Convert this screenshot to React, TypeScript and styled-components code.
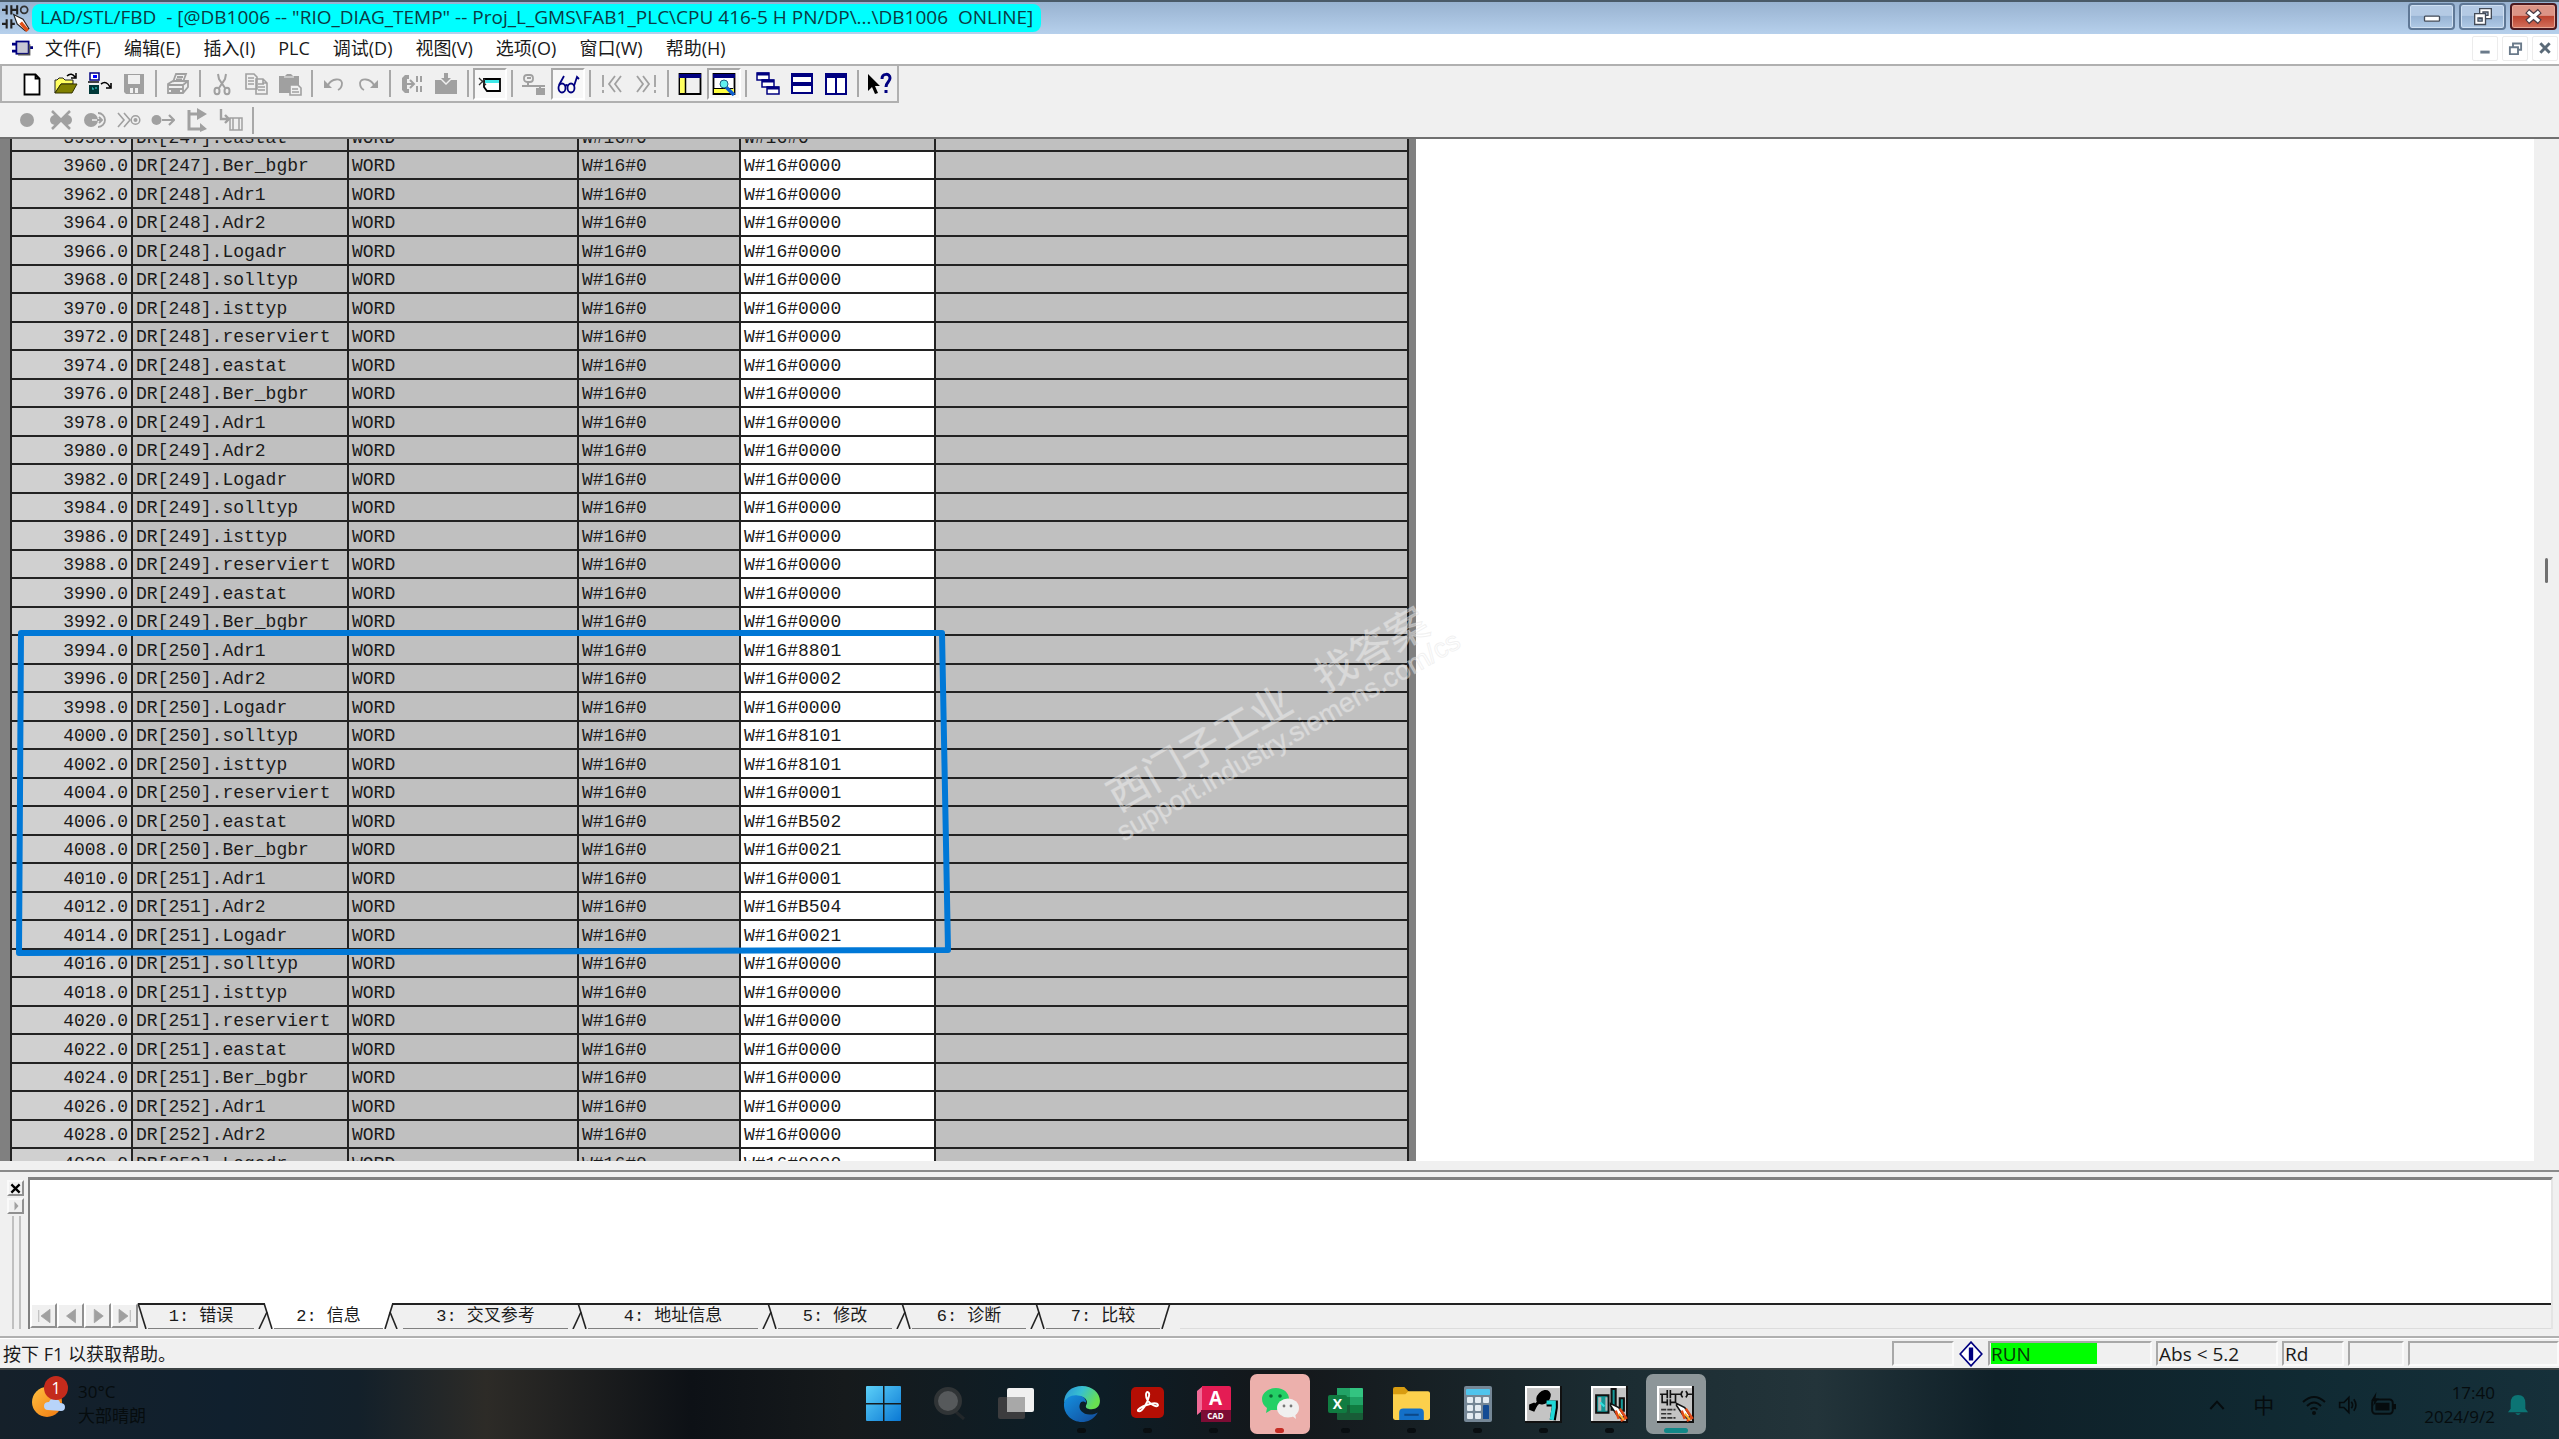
import React from "react";
import styled, { createGlobalStyle, css } from "styled-components";

const UI = `"Open Sans", "Noto Sans", "Noto Sans CJK SC", sans-serif`;
const MONO = `"Liberation Mono", "Noto Sans CJK SC", monospace`;
const FACE = "#f0f0f0";

const Global = createGlobalStyle`
  *, *::before, *::after { box-sizing: border-box; }
  body { margin: 0; background: ${FACE}; font-family: ${UI}; color: #1a1a1a; overflow: hidden; }
  button { font: inherit; color: inherit; padding: 0; border: 0; background: none; border-radius: 0; }
  svg { display: block; flex: none; }
`;

const Desktop = styled.div`
  display: flex;
  flex-direction: column;
  height: 100vh;
`;

/* ---------- title bar ---------- */
const TitleBar = styled.header`
  flex: none;
  display: flex;
  align-items: center;
  height: 34px;
  padding: 0 2px 0 2px;
  border-top: 2px solid #4a5a68;
  background: linear-gradient(#98b2d0, #b6d0ec);
`;
const TitleText = styled.h1`
  margin: 0 0 0 2px;
  padding: 0 8px;
  height: 28px;
  line-height: 26px;
  border-radius: 8px;
  background: #00ffff;
  color: #0c3a44;
  font-size: 19px;
  font-weight: 400;
  white-space: pre;
`;
const WindowButtons = styled.div`
  display: flex;
  gap: 4px;
  margin-left: auto;
  align-self: flex-start;
  padding-top: 1px;
`;
const WindowButton = styled.button<{ $close?: boolean }>`
  display: grid;
  place-items: center;
  width: 47px;
  height: 27px;
  border-radius: 4px;
  border: 2px solid ${(p) => (p.$close ? "#4a1a20" : "#5f7896")};
  box-shadow: inset 0 0 0 1px ${(p) => (p.$close ? "#e8a898" : "#cfe0f2")};
  background: ${(p) =>
    p.$close
      ? "linear-gradient(#dc9486 0 45%, #bc4430 50%, #d4705c)"
      : "linear-gradient(#b4cae4 0 45%, #98b4d4 50%, #b0cae6)"};
`;

/* ---------- menu bar ---------- */
const MenuBar = styled.nav`
  flex: none;
  display: flex;
  align-items: center;
  height: 32px;
  padding: 0 1px 2px 12px;
  background: #fff;
  border-bottom: 2px solid #b0b0b0;
`;
const MenuList = styled.div`
  display: flex;
  gap: 23px;
  margin-left: 12px;
`;
const MenuItem = styled.button`
  font-size: 18px;
  line-height: 28px;
  white-space: nowrap;
`;
const DocButtons = styled.div`
  display: flex;
  gap: 4px;
  margin-left: auto;
`;
const DocButton = styled.button`
  display: grid;
  place-items: center;
  width: 26px;
  height: 25px;
  border: 1px solid #ececec;
  border-radius: 2px;
`;

/* ---------- tool bars ---------- */
const ToolBar = styled.div<{ $start: number; $height: number }>`
  flex: none;
  display: flex;
  align-items: center;
  height: ${(p) => p.$height}px;
  padding-left: ${(p) => p.$start}px;
  background: ${FACE};
`;
const ToolBarFrame = styled.div`
  flex: none;
  display: flex;
  border-bottom: 2px solid #b0b0b0;
  border-left: 2px solid #b0b0b0;
  border-right: 2px solid #b0b0b0;
  width: fit-content;
`;
const ToolButton = styled.button<{ $pressed?: boolean }>`
  display: grid;
  place-items: center;
  width: 34px;
  height: 32px;
  ${(p) =>
    p.$pressed &&
    css`
      background: #f8f8f8;
      border: 2px solid;
      border-color: #a8a8a8 #fff #fff #a8a8a8;
    `}
`;
const ToolSeparator = styled.span`
  width: 2px;
  height: 27px;
  margin: 0 4px;
  background: #a8a8a8;
`;

/* ---------- data grid ---------- */
const Workspace = styled.main`
  flex: 1;
  min-height: 0;
  display: flex;
  position: relative;
  overflow: hidden;
  background: #fff;
  border-top: 2px solid #707070;
`;
const GridPane = styled.section`
  flex: none;
  padding: 0 7px 0 10px;
  background: #808080;
`;
const DataTable = styled.table`
  margin-top: -16px;
  border-collapse: separate;
  border-spacing: 0;
  table-layout: fixed;
  width: 1399px;
  border-left: 2px solid #222;
  background: #c0c0c0;
  font-family: ${MONO};
  font-size: 18px;
  line-height: 24px;
`;
const Row = styled.tr`
  height: 29px;
  &:nth-child(even) { height: 28px; }
`;
const Cell = styled.td<{ $tone?: "address" | "value" }>`
  padding: 2px 3px 0;
  height: inherit;
  overflow: hidden;
  white-space: nowrap;
  border-right: 2px solid #222;
  border-bottom: 2px solid #222;
  ${(p) => p.$tone === "address" && "background: #d0d0d0; text-align: right;"}
  ${(p) => p.$tone === "value" && "background: #fff;"}
`;
const ScrollStrip = styled.div`
  display: flex;
  align-items: center;
  justify-content: center;
  width: 25px;
  margin-left: auto;
  padding-bottom: 160px;
  background: #f0f0f0;
`;
const ScrollThumb = styled.span`
  width: 3px;
  height: 25px;
  border-radius: 2px;
  background: #707070;
`;
const Marker = styled.svg`
  position: absolute;
  left: 14px;
  top: 487px;
  pointer-events: none;
`;
const Watermark = styled.div`
  position: absolute;
  left: 1093px;
  top: 650px;
  transform: rotate(-30deg);
  transform-origin: 0 0;
  color: rgba(255, 255, 255, 0.42);
  -webkit-text-stroke: 1px rgba(220, 220, 220, 0.4);
  font-family: "Liberation Sans", "Noto Sans CJK SC", sans-serif;
  white-space: nowrap;
  pointer-events: none;
`;
const WatermarkName = styled.div`
  display: flex;
  gap: 34px;
  padding-left: 10px;
  font-size: 41px;
  line-height: 38px;
`;
const WatermarkUrl = styled.div`
  font-size: 27px;
  line-height: 28px;
`;

/* ---------- output panel ---------- */
const OutputPanel = styled.section`
  flex: none;
  display: flex;
  height: 168px;
  margin-top: 9px;
  padding: 5px 6px 7px 6px;
  border-top: 2px solid #8a8a8a;
  border-bottom: 2px solid #b0b0b0;
`;
const DockStrip = styled.div`
  display: flex;
  flex-direction: column;
  align-items: flex-end;
  gap: 2px;
  width: 18px;
  margin-right: 4px;
  padding-top: 3px;
`;
const DockButton = styled.button`
  display: grid;
  place-items: center;
  width: 17px;
  height: 16px;
  border: 2px solid;
  border-color: #fafafa #909090 #909090 #fafafa;
`;
const DockGrip = styled.span`
  flex: 1;
  width: 9px;
  margin: 0 3px 0 0;
  border: 2px solid #c0c0c0;
  border-width: 0 2px;
`;
const OutputBody = styled.div`
  flex: 1;
  display: flex;
  flex-direction: column;
  border-left: 2px solid #808080;
  border-top: 3px solid #808080;
  border-right: 2px solid #e4e4e4;
`;
const OutputText = styled.div`
  flex: 1;
  background: #fff;
`;
const TabBar = styled.div`
  display: flex;
  height: 26px;
  background: ${FACE};
`;
const PagerButton = styled.button`
  display: grid;
  place-items: center;
  width: 27px;
  height: 25px;
  border: 2px solid;
  border-color: #fff #909090 #909090 #fff;
`;
const Tab = styled.button<{ $width: number; $active?: boolean }>`
  width: ${(p) => p.$width}px;
  height: 26px;
  border-bottom: 1px solid #808080;
  border-top: 2px solid ${(p) => (p.$active ? "#fff" : "#222")};
  background: ${(p) => (p.$active ? "#fff" : FACE)};
  font-family: ${MONO};
  font-size: 17px;
  line-height: 22px;
  white-space: nowrap;
`;
const TabRest = styled.span`
  flex: 1;
  border-top: 2px solid #222;
  border-bottom: 1px solid #dcdcdc;
`;

/* ---------- status bar ---------- */
const StatusBar = styled.footer`
  flex: none;
  display: flex;
  align-items: center;
  height: 30px;
  padding-left: 3px;
  font-size: 18px;
  line-height: 22px;
  border-top: 1px solid #fff;
`;
const StatusCells = styled.div`
  display: flex;
  gap: 4px;
  margin-left: auto;
  align-items: center;
`;
const StatusCell = styled.span<{ $width: number }>`
  width: ${(p) => p.$width}px;
  height: 25px;
  padding-left: 1px;
  border: 2px solid;
  border-color: #a8a8a8 #fafafa #fafafa #a8a8a8;
  font-size: 19px;
`;
const RunFlag = styled.span`
  display: block;
  width: 106px;
  height: 21px;
  background: #00ff00;
  color: #063806;
`;

/* ---------- task bar ---------- */
const TaskBar = styled.div`
  flex: none;
  display: grid;
  grid-template-columns: 1fr auto 1fr;
  height: 71px;
  border-top: 2px solid #3c4244;
  color: #060c0e;
  background: linear-gradient(
    90deg, #15202a 0, #10202e 9%, #13202a 14%, #2d2b27 19%, #0d1116 27%,
    #161a1c 33%, #0c1e28 42%, #14171a 50%, #1b2c32 63%, #23343a 71%, #0f2028 78%, #102a33 90%, #16303a 100%
  );
`;
const Weather = styled.div`
  display: flex;
  gap: 10px;
  padding: 6px 0 0 30px;
  font-size: 17px;
  line-height: 24px;
`;
const WeatherText = styled.div`
  padding-top: 4px;
`;
const AppList = styled.div`
  display: flex;
`;
const AppButton = styled.button`
  display: grid;
  justify-items: center;
  width: 66px;
  height: 69px;
  padding-top: 4px;
`;
const AppTile = styled.span<{ $fill?: string; $dot?: string; $wide?: boolean }>`
  position: relative;
  display: grid;
  place-items: center;
  width: 60px;
  height: 60px;
  border-radius: 7px;
  background: ${(p) => p.$fill ?? "none"};
  &::after {
    content: "";
    position: absolute;
    bottom: 1px;
    width: ${(p) => (p.$wide ? 24 : 9)}px;
    height: 5px;
    border-radius: 3px;
    background: ${(p) => p.$dot ?? "none"};
  }
`;
const Tray = styled.div`
  display: flex;
  justify-content: flex-end;
  align-items: center;
  padding-right: 30px;
  font-size: 17px;
  line-height: 24px;
`;
const TrayIcons = styled.div`
  display: flex;
  align-items: center;
  gap: 12px;
  margin-right: 28px;
`;
const Ime = styled.span`
  margin: 0 16px;
  font-size: 21px;
`;
const Clock = styled.time`
  text-align: right;
  margin-right: 12px;
`;

/* ---------- icons ---------- */
const G = "#a0a0a0";
const N = "#000080";
type IconProps = { children: React.ReactNode; size?: number; box?: string };
const Icon = ({ children, size = 26, box = "0 0 24 24" }: IconProps) => (
  <svg width={size} height={size} viewBox={box} fill="none" aria-hidden="true">
    {children}
  </svg>
);

type Tool = { name: string; art: React.ReactNode; pressed?: boolean };
const tools: (Tool | null)[] = [
  { name: "新建", art: <path d="M4.500 2.500h11l4 4v16h-15zM15.500 2.500v4h4" fill="#fff" stroke="#000" strokeWidth="1.800" /> },
  {
    name: "打开",
    art: (
      <>
        <path d="M1 21V8h2l2-2h4l2 2h8v4H7z" fill="#ffff60" stroke="#222" />
        <path d="M1 21l6-9h16l-5 9z" fill="#808000" stroke="#333300" />
        <path d="M13 4c3-3 6-2 8 1m1-4v5h-5" stroke="#000" strokeWidth="1.500" />
      </>
    ),
  },
  {
    name: "在线打开",
    art: (
      <>
        <rect x="2" y="1" width="9" height="7" fill="#fff" stroke={N} strokeWidth="1.500" />
        <path d="M5 3h4v3H5z" fill="#0000ff" />
        <path d="M0 10h11" stroke="#444" strokeWidth="2" />
        <path d="M1 13h10v9H1z" fill="#003838" />
        <path d="M4 16h1v2M8 15v2" stroke="#40e0e0" />
        <path d="M13 12c4-3 7-1 9 3m1-4v5h-5" stroke="#000" strokeWidth="1.600" />
      </>
    ),
  },
  { name: "保存", art: <path fillRule="evenodd" d="M2 2h20v20H4l-2-2zM6 3v9h12V3zM8 16v5h3v-5zM13 16v5h3v-5z" fill={G} /> },
  null,
  {
    name: "打印",
    art: (
      <path d="M7 10l3-8h10l-3 8M11 5h6M10 7.500h6M2 12l5-3h15v6l-5 6H2zM2 13h15v8M17 13l5-4M3 17h14M5 19h9" stroke={G} strokeWidth="1.800" />
    ),
  },
  null,
  {
    name: "剪切",
    art: (
      <g stroke={G} strokeWidth="2">
        <path d="M8 2l1 5 6 9M16 2l-1 5-6 9" />
        <ellipse cx="7" cy="19" rx="2.500" ry="3.200" />
        <ellipse cx="17" cy="19" rx="2.500" ry="3.200" />
      </g>
    ),
  },
  {
    name: "复制",
    art: <path d="M2 2h8l3 3v12H2zM4 6h6M4 9h6M4 12h6M12 7h7l4 4v11H12zM14 12h6M14 15h7M14 18h7M19 7v4h4" fill={FACE} stroke={G} strokeWidth="1.600" />,
  },
  {
    name: "粘贴",
    art: (
      <>
        <path d="M1 4h6l2-2h4l2 2h6v9h-8v8H1z" fill={G} />
        <path d="M6 5h10" stroke={FACE} />
        <path d="M12 13h8l3 3v7H12zM14 17h6M14 20h7" fill={FACE} stroke={G} strokeWidth="1.600" />
      </>
    ),
  },
  null,
  { name: "撤消", art: <><path d="M2 8v8h8z" fill={G} /><path d="M6 13c4-7 13-7 14-2 0 4-2 6-4 7" stroke={G} strokeWidth="1.800" /></> },
  { name: "重做", art: <><path d="M22 8v8h-8z" fill={G} /><path d="M18 13c-4-7-13-7-14-2 0 4 2 6 4 7" stroke={G} strokeWidth="1.800" /></> },
  null,
  {
    name: "编译",
    art: (
      <>
        <path d="M9 3H5L2 6v12l3 3h4v-4H7V7h2z" fill={G} />
        <path d="M7 12h6M10 8l4 4-4 4M17 4v6M21 4v6M17 14v6M21 14v6" stroke={G} strokeWidth="2" />
      </>
    ),
  },
  { name: "下载", art: <path d="M1 8h6l5 5 5-5h6v14H1zM10 1h4v5h3l-5 5-5-5h3z" fill={G} /> },
  null,
  {
    name: "状态",
    pressed: true,
    art: (
      <>
        <path d="M6 7h16v12H9l-3-4z" fill="#fff" stroke="#000" strokeWidth="1.800" />
        <path d="M7 8h14v3H7z" fill="#40e8e8" />
        <path d="M1 6l7 7M1 13l6-6" stroke="#333" strokeWidth="1.300" />
      </>
    ),
  },
  null,
  { name: "网络", art: <><rect x="2" y="3" width="9" height="7" rx="3" stroke={G} strokeWidth="1.800" /><path d="M5 6h4M6 10v4M0 14h23M18 14v3" stroke={G} strokeWidth="2" /><path d="M14 16h9v7h-9z" fill={G} /></> },
  {
    name: "监视",
    pressed: true,
    art: (
      <g stroke={N} strokeWidth="1.800">
        <ellipse cx="6" cy="16" rx="3.500" ry="4.500" />
        <ellipse cx="15" cy="16" rx="3.500" ry="4.500" />
        <path d="M9.500 14q1-2 2 0M3 13L8 4M18 14l3-9 2 2" />
      </g>
    ),
  },
  null,
  { name: "上一个错误", art: <path d="M3 3v12M3 18v3M15 4l-6 8 6 8M21 4l-6 8 6 8" stroke={G} strokeWidth="1.800" /> },
  { name: "下一个错误", art: <path d="M21 3v12M21 18v3M3 4l6 8-6 8M9 4l6 8-6 8" stroke={G} strokeWidth="1.800" /> },
  null,
  {
    name: "总览",
    art: (
      <>
        <path d="M1.500 2h21v20h-21z" fill={FACE} stroke="#000" strokeWidth="1.800" />
        <path d="M2 5h5v16H2z" fill="#ffff60" />
        <path d="M1 2h22v4H1z" fill={N} />
        <path d="M7.500 6v16" stroke="#000" strokeWidth="1.500" />
      </>
    ),
  },
  {
    name: "详细资料",
    pressed: true,
    art: (
      <>
        <path d="M1.500 2h21v20h-21z" fill="#fff" stroke="#000" strokeWidth="1.800" />
        <path d="M1 2h22v4H1z" fill={N} />
        <path d="M2 17h20v4H2z" fill="#ffff40" />
        <path d="M1 16.500h20" stroke="#000" />
        <path d="M14 15l8 8" stroke="#1060d0" strokeWidth="3.500" />
        <circle cx="12" cy="12" r="4" fill="#60f0f0" stroke="#206080" />
      </>
    ),
  },
  null,
  {
    name: "层叠",
    art: [[1, 1], [6, 8], [11, 15]].map(([x, y]) => (
      <g key={x}>
        <rect x={x} y={y} width="12" height="7" fill="#fff" stroke={N} strokeWidth="1.500" />
        <path d={`M${x} ${y + 1}h12`} stroke={N} strokeWidth="3" />
      </g>
    )),
  },
  { name: "横向平铺", art: <><path d="M2 2h20v19H2z" fill="#fff" stroke={N} strokeWidth="2" /><path d="M2 3h20M2 12h20" stroke={N} strokeWidth="4" /></> },
  { name: "纵向平铺", art: <><path d="M2 2h20v20H2zM12 2v20" fill="#fff" stroke={N} strokeWidth="2" /><path d="M2 4h20" stroke={N} strokeWidth="4" /></> },
  null,
  {
    name: "帮助指针",
    art: (
      <>
        <path d="M0 2v17l4-4 3 7 3-1-3-7h5z" fill="#000" />
        <path d="M14 7c0-6 8-6 8-1 0 4-4 4-4 9M18 18v3" stroke={N} strokeWidth="3" />
      </>
    ),
  },
];

const debugTools: Tool[] = [
  { name: "断点", art: <circle cx="12" cy="12" r="7" fill={G} /> },
  { name: "删除断点", art: <><circle cx="6" cy="12" r="5" fill={G} /><circle cx="18" cy="12" r="5" fill={G} /><path d="M3 3l18 18M21 3L3 21" stroke={G} strokeWidth="2.500" /></> },
  { name: "激活断点", art: <><circle cx="8" cy="12" r="7" fill={G} /><path d="M15 5a7 7 0 110 14M11 12h8M16 9l3 3-3 3" stroke={G} strokeWidth="1.800" /><path d="M9 12h5" stroke={FACE} strokeWidth="1.500" /></> },
  { name: "下一断点", art: <><path d="M1 5l6 7-6 7M7 5l6 7-6 7" stroke={G} strokeWidth="1.600" /><circle cx="18.500" cy="12" r="4.300" stroke={G} strokeWidth="1.500" /><circle cx="18.500" cy="12" r="2" fill={G} /></> },
  { name: "继续", art: <><circle cx="5.500" cy="12" r="5" fill={G} /><path d="M11 12h11M18 7l5 5-5 5" stroke={G} strokeWidth="2.200" /></> },
  { name: "下一语句", art: <><path d="M4 2v19h12M4 6h9" stroke={G} strokeWidth="3" /><path d="M12 0l10 6-10 6zM15 15l7 6-7 3z" fill={G} /></> },
  { name: "执行调用", art: <><path d="M2 1v10h7M6 7l4 4-4 4" stroke={G} strokeWidth="2.400" /><path d="M11 10h12v12H11zM14 10v12M20 10v12" stroke={G} strokeWidth="1.500" /></> },
];

/* ---------- taskbar art ---------- */
const S7Frame = ({ children }: { children: React.ReactNode }) => (
  <Icon size={37} box="0 0 36 36">
    <rect width="36" height="36" fill="#111" />
    <rect width="34" height="34" fill="#fff" />
    <rect x="2" y="2" width="32" height="32" fill="#c4c4c4" />
    {children}
  </Icon>
);
const Rocket = () => (
  <>
    <path d="M19 17l8 4 5 8-2 3-5-4-6-9z" fill="#fff" stroke="#111" strokeWidth="1.500" />
    <path d="M24 24l3 8M28 22l6 9-5 3" stroke="#e04a18" strokeWidth="2.500" />
    <path d="M27 27l5 6" stroke="#ffb030" strokeWidth="2" />
  </>
);

type App = { name: string; art: React.ReactNode; fill?: string; dot?: string; wide?: boolean };
const DOT = "#090e11";
const apps: App[] = [
  {
    name: "开始",
    art: (
      <Icon size={36} box="0 0 36 36">
        <defs>
          <linearGradient id="win" x1="0" y1="0" x2="1" y2="1"><stop stopColor="#5cd0f8" /><stop offset="1" stopColor="#0a78d4" /></linearGradient>
        </defs>
        <path d="M0 1q0-1 1-1h16v17H0zM18.500 0H34q1 0 1 1v16H18.500zM0 18.500h17V35H1q-1 0-1-1zM18.500 18.500H35V34q0 1-1 1H18.500z" fill="url(#win)" />
      </Icon>
    ),
  },
  { name: "搜索", art: <Icon size={36} box="0 0 36 36"><path d="M24 26l8 7" stroke="#22272a" strokeWidth="3" /><circle cx="16" cy="15" r="12" fill="#56595b" stroke="#303436" strokeWidth="4" /></Icon> },
  { name: "任务视图", art: <Icon size={36} box="0 0 36 36"><rect x="0" y="11" width="27" height="22" rx="2" fill="#3c3c3e" /><rect x="9" y="2" width="27" height="24" rx="2" fill="#f0f0f0" /><path d="M9 11h18v15H9z" fill="#a8a8a8" /></Icon> },
  {
    name: "Microsoft Edge",
    dot: DOT,
    art: (
      <Icon size={38} box="0 0 36 36">
        <defs>
          <linearGradient id="e1" x1="0" y1="0" x2="1" y2=".4"><stop stopColor="#2890d8" /><stop offset=".5" stopColor="#38c0d0" /><stop offset="1" stopColor="#68e050" /></linearGradient>
          <linearGradient id="e2" x1="0" y1="0" x2="1" y2="1"><stop stopColor="#1490e0" /><stop offset="1" stopColor="#124a98" /></linearGradient>
        </defs>
        <path d="M1 17C1 7 8 1 18 1s17 7 17 14c0 6-4 8-8 8-5 0-6-2-5-4 2-3 0-7-5-8C10 10 4 12 1 17z" fill="url(#e1)" />
        <path d="M1 17c2-5 7-8 13-7 6 0 8 4 8 7-2-2-5-2-6 1-2 5 3 10 9 10 4 0 6-1 8-2-4 7-10 9-15 9C8 35 0 27 1 17z" fill="url(#e2)" />
      </Icon>
    ),
  },
  {
    name: "Adobe Acrobat",
    dot: DOT,
    art: (
      <Icon size={36} box="0 0 36 36">
        <rect x="1" y="1" width="33" height="31" rx="5" fill="#b40e04" />
        <path d="M8 25c-2-3 18-11 20-6 0 4-12-2-12-10 0-5 4-3 3 1-1 6-7 17-11 15z" stroke="#fff" strokeWidth="1.900" />
      </Icon>
    ),
  },
  {
    name: "AutoCAD",
    dot: DOT,
    art: (
      <svg width="36" height="36" viewBox="0 0 36 36" aria-hidden="true">
        <path d="M1 5l6-5v24l-6 5z" fill="#f06a96" />
        <path d="M6 0h27q2 0 2 2v22H6z" fill="#e41c54" />
        <path d="M5 24h30v12H5z" fill="#7c0c34" />
        <text x="19.500" y="19" textAnchor="middle" fontFamily="Open Sans, sans-serif" fontWeight="700" fontSize="19" fill="#fff">A</text>
        <text x="19.500" y="33" textAnchor="middle" fontFamily="Open Sans, sans-serif" fontWeight="700" fontSize="8" fill="#fff">CAD</text>
      </svg>
    ),
  },
  {
    name: "微信",
    fill: "#ecb0ac",
    dot: "#c42c24",
    art: (
      <Icon size={40} box="0 0 40 40">
        <path d="M16 4c8 0 13 5 13 11s-5 11-13 11l-5 0-5 3 1-5C4 22 2 19 2 15 2 9 8 4 16 4z" fill="#24d066" />
        <circle cx="11" cy="12" r="1.800" fill="#0a6a34" /><circle cx="20" cy="12" r="1.800" fill="#0a6a34" />
        <ellipse cx="28" cy="24" rx="11" ry="9.500" fill="#f0f0f0" />
        <path d="M31 31l5 4-1-6z" fill="#f0f0f0" />
        <circle cx="24" cy="22" r="1.400" fill="#777" /><circle cx="31" cy="22" r="1.400" fill="#777" />
      </Icon>
    ),
  },
  {
    name: "Excel",
    dot: DOT,
    art: (
      <svg width="36" height="36" viewBox="0 0 36 36" aria-hidden="true">
        <path d="M9 2h14v9H9z" fill="#22a366" /><path d="M22 2h12q1 0 1 1v8H22z" fill="#33c481" />
        <path d="M9 11h14v8H9z" fill="#107c41" /><path d="M22 11h13v8H22z" fill="#21a366" />
        <path d="M9 19h14v8H9z" fill="#185c37" /><path d="M22 19h13v8H22z" fill="#107c41" />
        <path d="M9 27h26v6q0 1-1 1H10q-1 0-1-1z" fill="#185c37" />
        <rect x="0" y="9" width="19" height="18" rx="2" fill="#107c41" />
        <text x="9.500" y="23" textAnchor="middle" fontFamily="Open Sans, sans-serif" fontWeight="700" fontSize="14" fill="#fff">X</text>
      </svg>
    ),
  },
  {
    name: "文件资源管理器",
    dot: DOT,
    art: (
      <Icon size={37} box="0 0 36 36">
        <path d="M0 3q0-2 2-2h9l4 4v6H0z" fill="#d89c10" />
        <path d="M0 8h12l3-3h19q2 0 2 2v24q0 2-2 2H2q-2 0-2-2z" fill="#fcd04c" />
        <path d="M6 33v-7q0-4 4-4h16q4 0 4 4v7z" fill="#1470c8" />
        <path d="M11 28h14" stroke="#0c4888" strokeWidth="2" />
      </Icon>
    ),
  },
  {
    name: "计算器",
    dot: DOT,
    art: (
      <Icon size={36} box="0 0 36 36">
        <rect x="4" y="0" width="28" height="36" rx="2" fill="#758796" />
        <rect x="6" y="3" width="24" height="6" rx="1" fill="#50c4ec" />
        {[11, 19, 27].map((y) => [7, 15, 23].map((x) => (
          <rect key={`${x}-${y}`} x={x} y={y} width="6" height="6" rx="1" fill={x === 23 && y > 11 ? "#144c94" : "#e4ecf2"} />
        )))}
        <path d="M23 20h6v13h-6z" fill="#144c94" />
      </Icon>
    ),
  },
  {
    name: "SIMATIC Manager",
    dot: DOT,
    art: (
      <S7Frame>
        <ellipse cx="18" cy="11" rx="8" ry="6" transform="rotate(-45 18 11)" fill="#000" />
        <path d="M4 18l5-2 3 3-3 6-5-2z" fill="#000" />
        <path d="M13 16l-4 4" stroke="#000" strokeWidth="3" />
        <path d="M21 17h8v4l-2 12" stroke="#000" strokeWidth="6" /><path d="M21 16h7v5l-2 12" stroke="#20d8d8" strokeWidth="4" />
      </S7Frame>
    ),
  },
  {
    name: "HW Config",
    dot: DOT,
    art: (
      <S7Frame>
        <path d="M5 9h12v17H5zM20 3h4v20h-4zM28 12h4v12h-4z" fill="#149898" stroke="#111" strokeWidth="2" />
        <path d="M7 11h3v13H7zM14 11h2v13h-2z" fill="#b4b4b4" />
        <path d="M9 16l4 4" stroke="#30e0e0" strokeWidth="2" />
        <Rocket />
      </S7Frame>
    ),
  },
  {
    name: "LAD/STL/FBD",
    fill: "#8d9699",
    dot: "#128888",
    wide: true,
    art: (
      <S7Frame>
        <path d="M3 8h7M10 4v8M13 4v8M13 8h10M30 8h4M10 13v6M13 13v6M5 8v8h5M13 16h5V8M25 5q-3 3 0 6M28 5q3 3 0 6" stroke="#111" strokeWidth="1.600" />
        <path d="M4 23h14M4 27h10M4 31h14" stroke="#333" strokeWidth="1.500" strokeDasharray="5 1" />
        <Rocket />
      </S7Frame>
    ),
  },
];

/* ---------- data ---------- */
const fields = ["Adr1", "Adr2", "Logadr", "solltyp", "isttyp", "reserviert", "eastat", "Ber_bgbr"];
const live: Record<number, string> = {
  3994: "8801", 3996: "0002", 4000: "8101", 4002: "8101", 4004: "0001", 4006: "B502",
  4008: "0021", 4010: "0001", 4012: "B504", 4014: "0021",
};
const rows = Array.from({ length: 37 }, (_, i) => {
  const address = 3958 + i * 2;
  const index = i + 6;
  return {
    address: `${address}.0`,
    name: `DR[${247 + Math.floor(index / 8)}].${fields[index % 8]}`,
    value: i === 0 ? "W#16#0" : `W#16#${live[address] ?? "0000"}`,
  };
});

const menus = ["文件(F)", "编辑(E)", "插入(I)", "PLC", "调试(D)", "视图(V)", "选项(O)", "窗口(W)", "帮助(H)"];

const tabs = [
  { label: "1: 错误", width: 106 },
  { label: "2: 信息", width: 109 },
  { label: "3: 交叉参考", width: 165 },
  { label: "4: 地址信息", width: 170 },
  { label: "5: 修改", width: 114 },
  { label: "6: 诊断", width: 114 },
  { label: "7: 比较", width: 114 },
];
const ACTIVE = 1;

/* Slanted edge between the tab before and the tab after; -1 stands for no tab. */
const Slant = ({ before, after }: { before: number; after: number }) => {
  const endsActive = before === ACTIVE;
  const first = before < 0;
  const full = endsActive || after < 0 ? "M10 0L2 26" : "M10 0L18 26";
  const short = endsActive ? "M7 9L14 26" : "M13 9L5 26";
  return (
    <svg width={first ? 10 : 20} height="26" viewBox={first ? "10 0 10 26" : "0 0 20 26"} fill="none" aria-hidden="true">
      {after === ACTIVE && <path d="M10 0h10v26h-2z" fill="#fff" />}
      {endsActive && <path d="M10 0H0v26h2z" fill="#fff" />}
      {!first && !endsActive && <path d="M0 1h10" stroke="#222" strokeWidth="2" />}
      {after !== ACTIVE && <path d="M10 1h10" stroke="#222" strokeWidth="2" />}
      <path d={full} stroke="#222" strokeWidth="1.600" />
      {!first && after >= 0 && <path d={short} stroke="#222" strokeWidth="1.600" />}
    </svg>
  );
};

const pagers = [
  { name: "第一个", d: "M5 4v16M20 3v18L8 12z" },
  { name: "上一个", d: "M18 3v18L6 12z" },
  { name: "下一个", d: "M7 3v18l12-9z" },
  { name: "最后一个", d: "M4 3v18l12-9zM19 4v16" },
];

export default function App() {
  return (
    <Desktop>
      <Global />
      <TitleBar>
        <Icon size={28}>
          <path d="M0 5h4M4 1v8M8 1v8M8 5h5M0 17h4M4 13v8M8 13v8M8 17h3M13 1v8" stroke="#222" strokeWidth="1.800" />
          <circle cx="19" cy="5" r="3" stroke="#333" strokeWidth="1.500" />
          <path d="M10 9l8 4 5 8-3 2-7-6z" fill="#fff" stroke="#222" />
          <path d="M16 16l6 7" stroke="#e05018" strokeWidth="3" />
        </Icon>
        <TitleText>{'LAD/STL/FBD  - [@DB1006 -- "RIO_DIAG_TEMP" -- Proj_L_GMS\\FAB1_PLC\\CPU 416-5 H PN/DP\\...\\DB1006  ONLINE]'}</TitleText>
        <WindowButtons>
          <WindowButton aria-label="最小化">
            <Icon size={20}><rect x="3" y="11" width="18" height="6" rx="1" fill="#fff" stroke="#444c58" strokeWidth="1.600" /></Icon>
          </WindowButton>
          <WindowButton aria-label="还原">
            <Icon size={20}>
              <path fillRule="evenodd" d="M8 2h14v12H8zM12 6v4h6V6z" fill="#fff" stroke="#444c58" strokeWidth="1.600" />
              <path fillRule="evenodd" d="M2 8h13v13H2zM6 13v4h5v-4z" fill="#fff" stroke="#444c58" strokeWidth="1.600" />
            </Icon>
          </WindowButton>
          <WindowButton $close aria-label="关闭">
            <Icon size={19}>
              <path d="M4 5l16 14M20 5L4 19" stroke="#4a3a44" strokeWidth="7.500" />
              <path d="M5 6l14 12M19 6L5 18" stroke="#fff" strokeWidth="4.500" />
            </Icon>
          </WindowButton>
        </WindowButtons>
      </TitleBar>

      <MenuBar>
        <Icon size={21}>
          <rect x="5" y="4" width="14" height="14" fill="#c8c8d4" stroke={N} strokeWidth="2" />
          <path d="M0 7h5M0 15h5M19 11h5" stroke={N} strokeWidth="3" />
          <path d="M7 19h13V7" stroke="#555" strokeWidth="2" />
        </Icon>
        <MenuList>
          {menus.map((m) => <MenuItem key={m}>{m}</MenuItem>)}
        </MenuList>
        <DocButtons>
          <DocButton aria-label="最小化文档"><Icon size={14}><path d="M4 19h16" stroke="#6a7a8a" strokeWidth="5" /></Icon></DocButton>
          <DocButton aria-label="还原文档"><Icon size={15}><path d="M3 10h13v11H3zM8 10V4h13v10h-5" stroke="#6a7a8a" strokeWidth="3" /></Icon></DocButton>
          <DocButton aria-label="关闭文档"><Icon size={14}><path d="M4 4l16 16M20 4L4 20" stroke="#5a6a78" strokeWidth="5" /></Icon></DocButton>
        </DocButtons>
      </MenuBar>

      <ToolBarFrame>
        <ToolBar $start={13} $height={35}>
          {tools.map((t, i) =>
            t ? (
              <ToolButton key={t.name} aria-label={t.name} $pressed={t.pressed}><Icon size={24}>{t.art}</Icon></ToolButton>
            ) : (
              <ToolSeparator key={i} />
            )
          )}
        </ToolBar>
      </ToolBarFrame>
      <ToolBar $start={10} $height={34}>
        {debugTools.map((t) => (
          <ToolButton key={t.name} aria-label={t.name}><Icon size={24}>{t.art}</Icon></ToolButton>
        ))}
        <ToolSeparator />
      </ToolBar>

      <Workspace>
        <GridPane>
          <DataTable>
            <colgroup>
              <col width="121" /><col width="216" /><col width="230" /><col width="162" /><col width="195" /><col />
            </colgroup>
            <tbody>
              {rows.map((r, i) => (
                <Row key={r.address}>
                  <Cell $tone="address">{r.address}</Cell>
                  <Cell>{r.name}</Cell>
                  <Cell>WORD</Cell>
                  <Cell>W#16#0</Cell>
                  <Cell $tone={i > 0 ? "value" : undefined}>{r.value}</Cell>
                  <Cell />
                </Row>
              ))}
            </tbody>
          </DataTable>
        </GridPane>
        <ScrollStrip><ScrollThumb /></ScrollStrip>
        <Marker width="942" height="334" viewBox="0 0 942 334" fill="none" aria-hidden="true">
          <path d="M7 7H928L934 324L5 327Z" stroke="#0078d7" strokeWidth="6" strokeLinejoin="round" />
        </Marker>
        <Watermark>
          <WatermarkName><span>西门子工业</span><span>找答案</span></WatermarkName>
          <WatermarkUrl>support.industry.siemens.com/cs</WatermarkUrl>
        </Watermark>
      </Workspace>

      <OutputPanel>
        <DockStrip>
          <DockButton aria-label="关闭输出"><Icon size={11}><path d="M3 3l18 18M21 3L3 21" stroke="#000" strokeWidth="5" /></Icon></DockButton>
          <DockButton aria-label="展开输出"><Icon size={12}><path d="M9 3v18l8-9z" fill={G} /></Icon></DockButton>
          <DockGrip />
        </DockStrip>
        <OutputBody>
          <OutputText />
          <TabBar role="tablist">
            {pagers.map((p) => (
              <PagerButton key={p.name} aria-label={p.name}><Icon size={18}><path d={p.d} fill={G} stroke={G} /></Icon></PagerButton>
            ))}
            {tabs.map((t, i) => (
              <React.Fragment key={t.label}>
                <Slant before={i - 1} after={i} />
                <Tab role="tab" aria-selected={i === ACTIVE} $width={t.width} $active={i === ACTIVE}>{t.label}</Tab>
              </React.Fragment>
            ))}
            <Slant before={tabs.length - 1} after={-1} />
            <TabRest />
          </TabBar>
        </OutputBody>
      </OutputPanel>

      <StatusBar>
        <span>按下 F1 以获取帮助。</span>
        <StatusCells>
          <StatusCell $width={62} />
          <Icon size={26}><path d="M12 1l10 11-10 11L2 12z" fill="#fff" stroke={N} strokeWidth="1.500" /><path d="M12 6v12" stroke={N} strokeWidth="4" /></Icon>
          <StatusCell $width={164}><RunFlag>RUN</RunFlag></StatusCell>
          <StatusCell $width={122}>Abs &lt; 5.2</StatusCell>
          <StatusCell $width={62}>Rd</StatusCell>
          <StatusCell $width={56} />
          <StatusCell $width={151} />
        </StatusCells>
      </StatusBar>

      <TaskBar>
        <Weather>
          <svg width="38" height="44" viewBox="0 0 38 44" aria-hidden="true">
            <defs><linearGradient id="sun" x1="0" y1="0" x2="1" y2="1"><stop stopColor="#ffc040" /><stop offset="1" stopColor="#f07810" /></linearGradient></defs>
            <circle cx="17" cy="26" r="15" fill="url(#sun)" />
            <path d="M18 34q-4 0-4-4t5-4q2-5 7-3 4 1 4 4 5 0 5 4t-4 4z" fill="#b8d4fa" />
            <circle cx="26" cy="12" r="12" fill="#c42b1c" />
            <text x="26" y="18" textAnchor="middle" fontFamily="Open Sans, sans-serif" fontSize="16" fill="#fff">1</text>
          </svg>
          <WeatherText><div>30°C</div><div>大部晴朗</div></WeatherText>
        </Weather>
        <AppList>
          {apps.map((a) => (
            <AppButton key={a.name} aria-label={a.name}>
              <AppTile $fill={a.fill} $dot={a.dot} $wide={a.wide}>{a.art}</AppTile>
            </AppButton>
          ))}
        </AppList>
        <Tray>
          <TrayIcons>
            <Icon size={16}><path d="M2 18L12 7l10 11" stroke="#060c0e" strokeWidth="3" /></Icon>
            <Ime>中</Ime>
            <Icon size={24}>
              <path d="M1 9q11-10 22 0M5 13q7-7 14 0M8.500 16.500q3.500-3 7 0" stroke="#060c0e" strokeWidth="2" />
              <circle cx="12" cy="20" r="2" fill="#060c0e" />
            </Icon>
            <Icon size={20}><path d="M2 9h5l6-6v18l-6-6H2zM16 8q3 4 0 8M19 5q5 7 0 14" stroke="#060c0e" strokeWidth="2" /></Icon>
            <Icon size={26}>
              <rect x="2" y="7" width="19" height="13" rx="3" stroke="#060c0e" strokeWidth="1.800" />
              <path d="M5 10h13v7H5zM21 11h3v5h-3zM6 0L1 8h3L3 13l5-7H5z" fill="#060c0e" />
            </Icon>
          </TrayIcons>
          <Clock dateTime="2024-09-02T17:40"><div>17:40</div><div>2024/9/2</div></Clock>
          <Icon size={22}><path d="M12 1q8 0 8 9v6l3 4H1l3-4v-6q0-9 8-9zM9 21h6q-3 4-6 0z" fill="#0c7474" /></Icon>
        </Tray>
      </TaskBar>
    </Desktop>
  );
}
